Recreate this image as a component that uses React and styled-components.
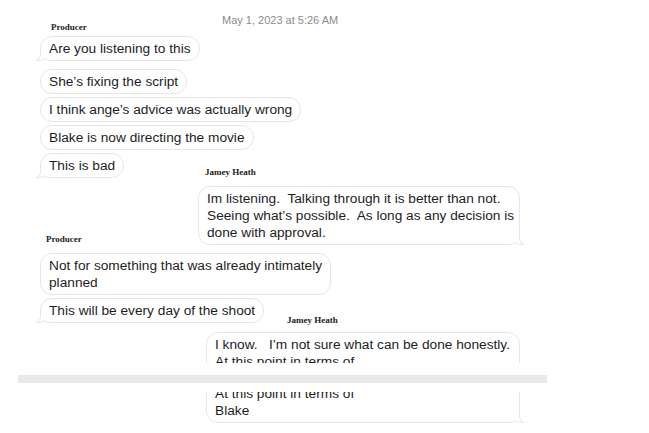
import styled, { createGlobalStyle } from 'styled-components';

const GlobalStyle = createGlobalStyle`
  html, body {
    margin: 0;
    padding: 0;
    background: #fff;
  }
  body {
    font-family: "Liberation Sans", Arial, sans-serif;
  }
`;

const Page = styled.div`
  width: 649px;
  height: 433px;
  box-sizing: border-box;
  padding-top: 14px;
  overflow: hidden;
  display: flex;
  flex-direction: column;
  align-items: flex-start;
`;

const Pair = styled.div`
  align-self: stretch;
  display: grid;
  grid-template-columns: ${(p) => p.$split}px auto;
  align-items: end;
  justify-items: start;
  margin-top: ${(p) => p.$gap || 0}px;
`;

const Stamp = styled.div`
  font-size: 11px;
  line-height: 13px;
  color: #8c8c8c;
  margin-bottom: 5px;
`;

const Sender = styled.div`
  font-family: "Liberation Serif", "Times New Roman", serif;
  font-weight: bold;
  font-size: 9px;
  line-height: 11px;
  color: #222;
  padding-left: ${(p) => p.$x || 0}px;
  margin-bottom: ${(p) => -(p.$drop || 0)}px;
`;

const Bubble = styled.div`
  position: relative;
  box-sizing: border-box;
  margin-top: ${(p) => p.$gap || 0}px;
  margin-left: ${(p) => p.$x || 0}px;
  width: ${(p) => (p.$w ? `${p.$w}px` : 'auto')};
  padding: 3px 8px;
  border: 1px solid #e6e6e6;
  border-radius: 12px;
  background: #fff;
  color: #1d1d1f;
  font-size: 13.7px;
  line-height: 17px;
  white-space: pre;
`;

const Text = styled.span`
  position: relative;
`;

const TailSvg = styled.svg`
  position: absolute;
  bottom: -1px;
  width: 18px;
  height: 14px;
  overflow: visible;
  ${(p) => (p.$side === 'right' ? 'right: -5px; transform: scaleX(-1);' : 'left: -5px;')}
`;

const Slice = styled.div`
  align-self: stretch;
  height: ${(p) => p.$h}px;
  margin-top: ${(p) => p.$gap || 0}px;
  overflow: hidden;
`;

const Seam = styled.div`
  margin-top: 12px;
  margin-left: 18px;
  width: 529px;
  height: 8px;
  background: #e8e8e8;
`;

const TAIL = 'M4.5 0 V7 C4.5 10 3 12.5 0.5 13.5 C3.5 13.9 6.5 13.2 8.5 11.8 C10 13 12 13.5 18 13.5';

function Tail({ side }) {
  return (
    <TailSvg $side={side} viewBox="0 0 18 14">
      <path d={`${TAIL} V0 Z`} fill="#fff" />
      <path d={TAIL} fill="none" stroke="#e6e6e6" strokeWidth="1" />
    </TailSvg>
  );
}

function Msg({ children, tail, ...rest }) {
  return (
    <Bubble {...rest}>
      {tail && <Tail side={tail} />}
      <Text>{children}</Text>
    </Bubble>
  );
}

const lastReply = "I know.   I’m not sure what can be done honestly.\nAt this point in terms of\nBlake";

export default function App() {
  return (
    <>
      <GlobalStyle />
      <Page>
        <Pair $split={222}>
          <Sender $x={51} $drop={1}>Producer</Sender>
          <Stamp>May 1, 2023 at 5:26 AM</Stamp>
        </Pair>

        <Msg $x={40} $gap={4} tail="left">Are you listening to this</Msg>
        <Msg $x={40} $gap={8}>She’s fixing the script</Msg>
        <Msg $x={40} $gap={3}>I think ange’s advice was actually wrong</Msg>
        <Msg $x={40} $gap={3}>Blake is now directing the movie</Msg>

        <Pair $split={205} $gap={3}>
          <Msg $x={40} tail="left">This is bad</Msg>
          <Sender>Jamey Heath</Sender>
        </Pair>

        <Pair $split={198} $gap={8}>
          <Sender $x={46}>Producer</Sender>
          <Msg $w={322} tail="right">
            {"Im listening.  Talking through it is better than not.\nSeeing what’s possible.  As long as any decision is\ndone with approval."}
          </Msg>
        </Pair>

        <Msg $x={40} $gap={8}>{"Not for something that was already intimately\nplanned"}</Msg>

        <Pair $split={287} $gap={3}>
          <Msg $x={40} tail="left">This will be every day of the shoot</Msg>
          <Sender $drop={2.5}>Jamey Heath</Sender>
        </Pair>

        <Slice $gap={9} $h={31}>
          <Msg $x={206} $w={314}>{lastReply}</Msg>
        </Slice>

        <Seam />

        <Slice $gap={9} $h={32}>
          <Msg $x={206} $w={314} $gap={-28.5} tail="right">{lastReply}</Msg>
        </Slice>
      </Page>
    </>
  );
}
